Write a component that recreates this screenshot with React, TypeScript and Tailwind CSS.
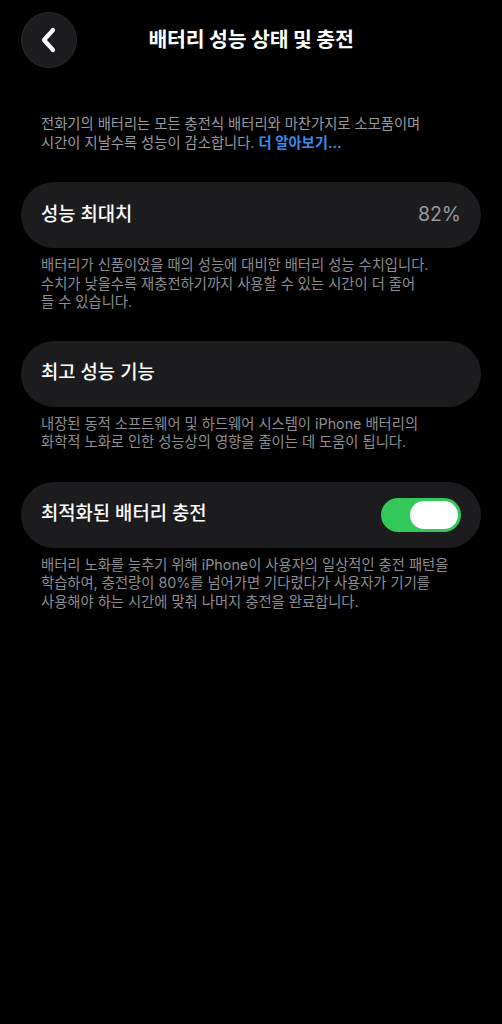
export default function App() {
  return (
    <div
      className="min-h-[1024px] w-full bg-black text-white"
      style={{ fontFamily: 'Inter, "Noto Sans CJK KR", sans-serif' }}
    >
      {/* header */}
      <div className="relative flex h-[80px] items-start pt-[12px] pl-[21px]">
        <button className="flex h-[56px] w-[56px] items-center justify-center rounded-full border border-[#2a2a2c] bg-[#1c1c1e]">
          <svg width="18" height="26" viewBox="0 0 18 26" fill="none">
            <path
              d="M13 3 L4 13 L13 23"
              stroke="white"
              strokeWidth="4.2"
              strokeLinecap="round"
              strokeLinejoin="round"
            />
          </svg>
        </button>
        <h1 className="absolute left-0 right-0 top-[26px] text-center text-[20.5px] font-bold leading-[28px] tracking-[-0.2px]">
          배터리 성능 상태 및 충전
        </h1>
      </div>

      <p className="mt-[34px] px-[41px] text-[14.3px] leading-[19px] text-[#9a9aa0]">
        전화기의 배터리는 모든 충전식 배터리와 마찬가지로 소모품이며
        <br />
        시간이 지날수록 성능이 감소합니다.{" "}
        <span className="font-semibold text-[#3b8cf0]">더 알아보기...</span>
      </p>

      <div className="mx-[21px] mt-[30px] flex h-[66px] items-center justify-between rounded-full bg-[#1c1c1e] px-[20px]">
        <span className="text-[18.8px] font-medium">성능 최대치</span>
        <span className="text-[19.5px] text-[#98989e]">82%</span>
      </div>
      <p className="mt-[8px] px-[41px] text-[14.3px] leading-[18.5px] text-[#8e8e94]">
        배터리가 신품이었을 때의 성능에 대비한 배터리 성능 수치입니다.
        <br />
        수치가 낮을수록 재충전하기까지 사용할 수 있는 시간이 더 줄어
        <br />
        들 수 있습니다.
      </p>

      <div className="mx-[21px] mt-[29px] flex h-[66px] items-center rounded-full bg-[#1c1c1e] px-[20px]">
        <span className="text-[18.8px] font-medium">최고 성능 기능</span>
      </div>
      <p className="mt-[8px] px-[41px] text-[14.3px] leading-[18.5px] text-[#8e8e94]">
        내장된 동적 소프트웨어 및 하드웨어 시스템이 iPhone 배터리의
        <br />
        화학적 노화로 인한 성능상의 영향을 줄이는 데 도움이 됩니다.
      </p>

      <div className="mx-[21px] mt-[30px] flex h-[66px] items-center justify-between rounded-full bg-[#1c1c1e] pl-[20px] pr-[20px]">
        <span className="text-[18.8px] font-medium">최적화된 배터리 충전</span>
        <div className="flex h-[34px] w-[80px] items-center justify-end rounded-full bg-[#34c759] pr-[3px]">
          <div className="h-[28px] w-[48px] rounded-full bg-white" />
        </div>
      </div>
      <p className="mt-[8px] px-[41px] text-[14.3px] leading-[18.5px] text-[#8e8e94]">
        배터리 노화를 늦추기 위해 iPhone이 사용자의 일상적인 충전 패턴을
        <br />
        학습하여, 충전량이 80%를 넘어가면 기다렸다가 사용자가 기기를
        <br />
        사용해야 하는 시간에 맞춰 나머지 충전을 완료합니다.
      </p>
    </div>
  );
}
